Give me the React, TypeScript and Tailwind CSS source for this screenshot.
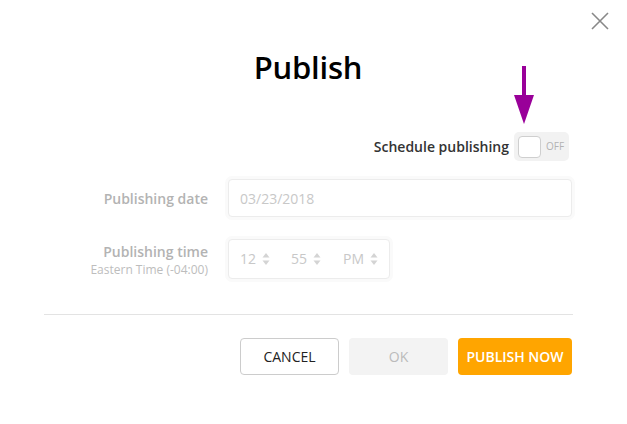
import React from "react";

function Stepper() {
  return (
    <svg width="8" height="14" viewBox="0 0 8 14" className="ml-[6px]">
      <path d="M4 1 L7.5 5.5 H0.5 Z" fill="#d4d4d4" />
      <path d="M4 13 L7.5 8.5 H0.5 Z" fill="#d4d4d4" />
    </svg>
  );
}

export default function App() {
  return (
    <div
      className="relative w-[627px] h-[424px] bg-white overflow-hidden"
      style={{ fontFamily: '"Open Sans", sans-serif' }}
    >
      {/* Close */}
      <button className="absolute top-[11px] left-[590px] w-[20px] h-[20px]">
        <svg width="20" height="20" viewBox="0 0 20 20">
          <path d="M2 2 L18 18 M18 2 L2 18" stroke="#888" strokeWidth="1.6" />
        </svg>
      </button>

      {/* Annotation arrow */}
      <svg className="absolute left-[514px] top-[66px]" width="20" height="58" viewBox="0 0 20 58">
        <rect x="8" y="0" width="4" height="30" fill="#990099" />
        <path d="M0 29 H20 L10 58 Z" fill="#990099" />
      </svg>

      <div className="pl-[44px] pr-[55px] pt-[47px]">
        <h1 className="text-center text-[31px] leading-[40px] font-semibold text-black tracking-[-0.2px]">
          Publish
        </h1>

        {/* Schedule toggle */}
        <div className="flex justify-end items-center mt-[45px] pr-[3px]">
          <span className="text-[14px] font-semibold text-[#333] mr-[5px]">Schedule publishing</span>
          <div className="flex items-center w-[55px] h-[29px] bg-[#f2f2f2] rounded-[5px] pl-[4px]">
            <div className="w-[23px] h-[22px] bg-white border border-[#cfcfcf] rounded-[4px]" />
            <span className="ml-[5px] text-[10px] text-[#b3b3b3]">OFF</span>
          </div>
        </div>

        {/* Form */}
        <div className="grid grid-cols-[164px_1fr] gap-x-[20px] gap-y-[21px] mt-[18px] items-center">
          <div className="text-right text-[14px] font-semibold text-[#b3b3b3]">Publishing date</div>
          <div className="rounded-[7px] bg-[#fafafa] p-[3px] -m-[3px]">
            <div className="h-[38px] bg-white border border-[#ececec] rounded-[4px] flex items-center px-[11px] text-[14px] text-[#c8c8c8]">
              03/23/2018
            </div>
          </div>

          <div className="text-right self-start mt-[5px]">
            <div className="text-[14px] font-semibold text-[#b3b3b3] leading-[18px]">Publishing time</div>
            <div className="text-[12px] text-[#bdbdbd] leading-[18px]">Eastern Time (-04:00)</div>
          </div>
          <div className="flex">
            <div className="rounded-[7px] bg-[#fafafa] p-[3px] -m-[3px]">
              <div className="w-[162px] h-[40px] bg-white border border-[#ececec] rounded-[4px] flex items-center pl-[11px] text-[14px] text-[#c8c8c8]">
                <span className="flex items-center w-[51px]">12<Stepper /></span>
                <span className="flex items-center w-[52px]">55<Stepper /></span>
                <span className="flex items-center">PM<Stepper /></span>
              </div>
            </div>
          </div>
        </div>

        <div className="h-px bg-[#e3e3e3] mt-[35px] mr-[-1px]" />

        {/* Buttons */}
        <div className="flex justify-end gap-[10px] mt-[23px]">
          <button className="w-[99px] h-[37px] border border-[#cccccc] rounded-[4px] text-[14px] text-[#222]">
            CANCEL
          </button>
          <button className="w-[99px] h-[37px] bg-[#f3f3f3] rounded-[4px] text-[14px] text-[#bbb]">
            OK
          </button>
          <button className="w-[114px] h-[37px] bg-[#ffa500] rounded-[4px] text-[14px] font-semibold text-white">
            PUBLISH NOW
          </button>
        </div>
      </div>
    </div>
  );
}
